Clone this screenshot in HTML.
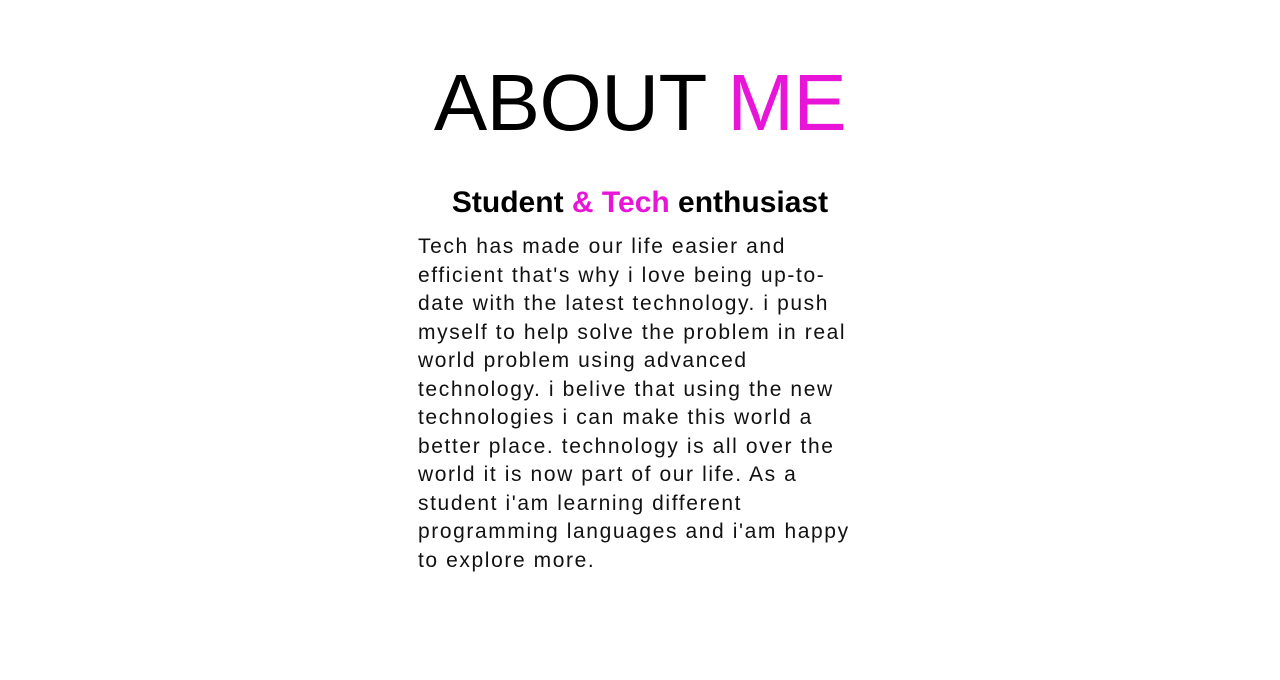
<!DOCTYPE html>
<html><head><meta charset="utf-8"><style>
html,body{margin:0;padding:0;background:#fff;width:1280px;height:680px;overflow:hidden}
body{font-family:"Liberation Sans",sans-serif;color:#000;position:relative}
.m{color:#e815d8}
h1{position:absolute;left:0;width:1280px;text-align:center;top:53px;margin:0;font-weight:normal;font-size:80px;line-height:100px;letter-spacing:-0.5px}
h2{position:absolute;left:0;width:1280px;text-align:center;top:183px;margin:0;font-weight:bold;font-size:30px;line-height:40px}
p{position:absolute;left:418px;top:233px;margin:0;font-size:21px;line-height:28.5px;letter-spacing:1.6px;white-space:nowrap;color:#111}
</style></head><body>
<h1>ABOUT <span class="m">ME</span></h1>
<h2>Student <span class="m">&amp; Tech</span> enthusiast</h2>
<p>Tech has made our life easier and<br>efficient that's why i love being up-to-<br>date with the latest technology. i push<br>myself to help solve the problem in real<br>world problem using advanced<br>technology. i belive that using the new<br>technologies i can make this world a<br>better place. technology is all over the<br>world it is now part of our life. As a<br>student i'am learning different<br>programming languages and i'am happy<br>to explore more.</p>
</body></html>
